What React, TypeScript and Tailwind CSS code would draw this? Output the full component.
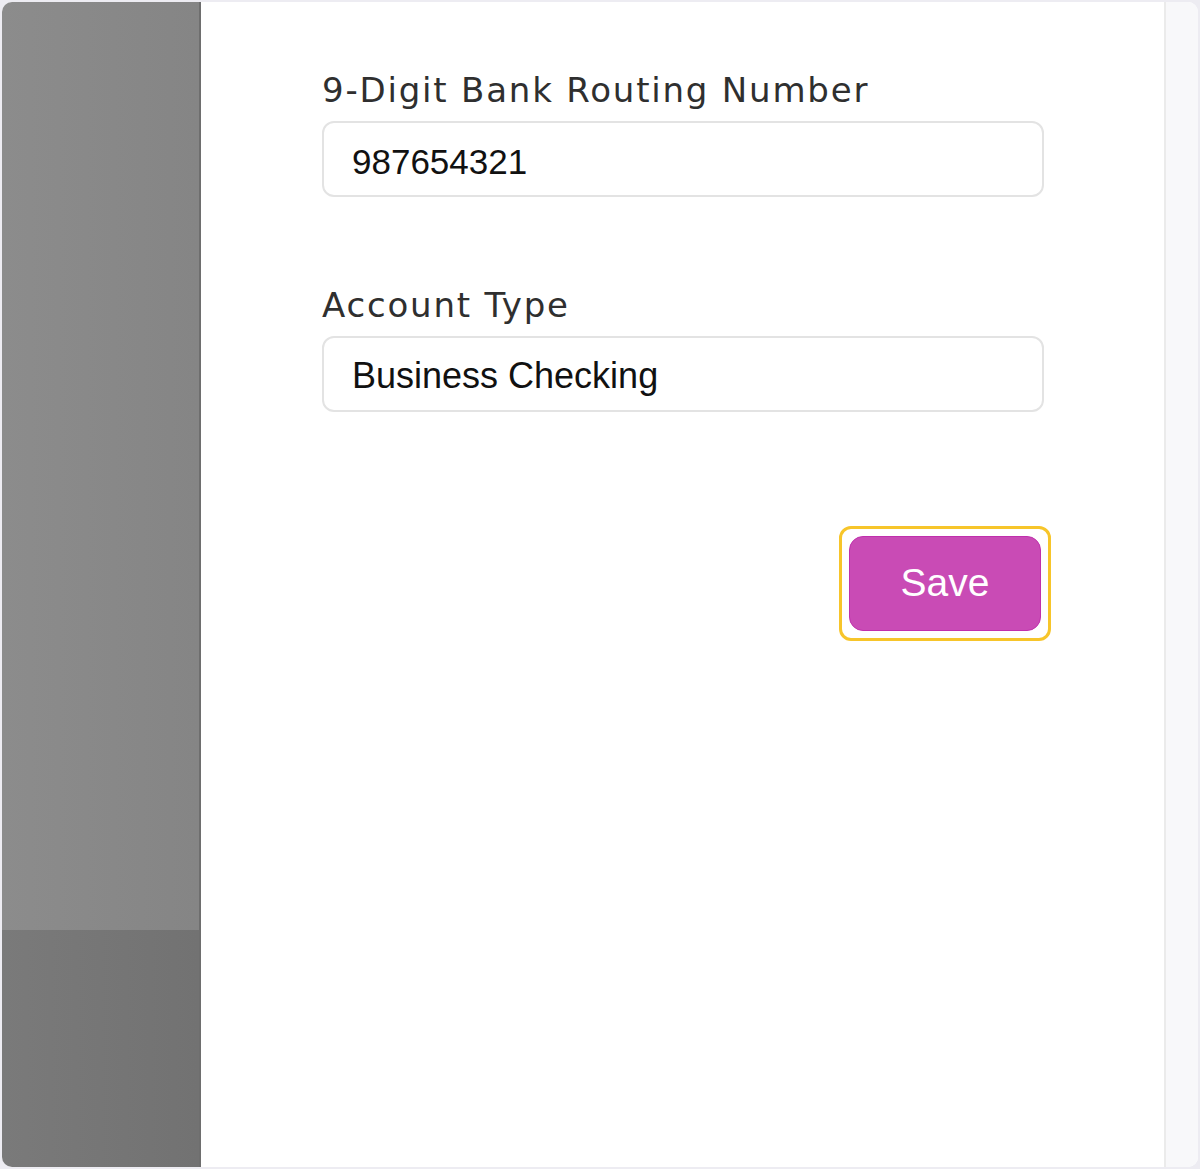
export default function App() {
  return (
    <div className="w-[1200px] h-[1169px] bg-[#edecf2] p-[2px] flex">
      <div className="flex flex-1 rounded-[10px] overflow-hidden bg-white">
        <div className="w-[199px] flex flex-col border-r-2 border-[#6e6e6e]">
          <div className="h-[928px] bg-gradient-to-r from-[#8c8c8c] to-[#858585]" />
          <div className="flex-1 bg-gradient-to-r from-[#7a7a7a] to-[#727272]" />
        </div>
        <main className="flex-1 bg-white border-r-2 border-[#ebebeb] pl-[121px] pt-[68px]">
          <div className="w-[722px] flex flex-col">
            <label className="text-[34px] leading-[40px] tracking-[1.8px] text-[#2f2f2f] font-['DejaVu_Sans',sans-serif]">
              9-Digit Bank Routing Number
            </label>
            <div className="mt-[11px] h-[76px] rounded-[12px] border-2 border-[#e3e3e3] flex items-center pl-[28px] pt-[6px] text-[35px] text-[#111] font-['Liberation_Sans',Arial,sans-serif]">
              987654321
            </div>
            <label className="mt-[88px] text-[34px] leading-[40px] tracking-[1.8px] text-[#2f2f2f] font-['DejaVu_Sans',sans-serif]">
              Account Type
            </label>
            <div className="mt-[11px] h-[76px] rounded-[12px] border-2 border-[#e3e3e3] flex items-center pl-[28px] pt-[4px] text-[36px] text-[#111] font-['Liberation_Sans',Arial,sans-serif]">
              Business Checking
            </div>
            <div className="mt-[114px] flex justify-end -mr-[7px]">
              <div className="rounded-[12px] border-[3px] border-[#f7c52a] p-[7px]">
                <button className="w-[192px] h-[95px] rounded-[14px] bg-[#c94bb5] border border-[#c030ac] text-white text-[39px] font-['Liberation_Sans',Arial,sans-serif]">
                  Save
                </button>
              </div>
            </div>
          </div>
        </main>
        <div className="w-[32px] bg-[#f8f8fa]" />
      </div>
    </div>
  );
}
